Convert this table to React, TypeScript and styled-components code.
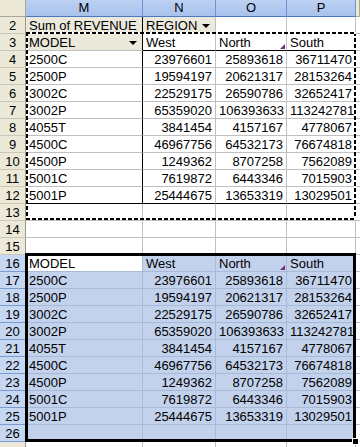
import React from "react";
import styled, { createGlobalStyle } from "styled-components";

const GlobalStyle = createGlobalStyle`
  html, body { margin: 0; padding: 0; background: #fff; }
  body { font-family: "Liberation Sans", Arial, sans-serif; overflow: hidden; }
`;

const Sheet = styled.div`
  position: relative;
  width: 360px;
  height: 447px;
  overflow: hidden;
  display: grid;
  grid-template-columns: 26px 117px 73px 71px 69px 4px;
  grid-template-rows: 17px;
  grid-auto-rows: 17px;
  font-size: 13px;
  color: #000;
`;

const Corner = styled.div`
  box-sizing: border-box;
  background: #ece9d8;
  border-right: 1px solid #aca899;
  border-bottom: 1px solid #aca899;
`;

const ColHead = styled.div<{ $sel?: boolean }>`
  box-sizing: border-box;
  background: ${(p) => (p.$sel ? "linear-gradient(#bcd1f3, #a9c2ec)" : "#ece9d8")};
  border-right: 1px solid ${(p) => (p.$sel ? "#6f94d3" : "#aca899")};
  border-bottom: 1px solid ${(p) => (p.$sel ? "#4f78c2" : "#aca899")};
  text-align: center;
  line-height: 16px;
  overflow: hidden;
`;

const RowHead = styled.div<{ $sel?: boolean }>`
  box-sizing: border-box;
  background: ${(p) => (p.$sel ? "#c6d7f2" : "#ece9d8")};
  border-right: 1px solid ${(p) => (p.$sel ? "#4a73bf" : "#9c9886")};
  border-bottom: 1px solid ${(p) => (p.$sel ? "#7a9bd3" : "#cbc7b6")};
  text-align: center;
  padding-top: 2px;
  line-height: 14px;
  overflow: hidden;
`;

type CellProps = {
  $right?: boolean;
  $bg?: string;
  $grid?: string;
  $darkRight?: boolean;
  $darkBottom?: boolean;
};

const Cell = styled.div<CellProps>`
  position: relative;
  box-sizing: border-box;
  background: ${(p) => p.$bg || "#fff"};
  border-right: 1px solid ${(p) => (p.$darkRight ? "#000" : p.$grid || "#c0c0c0")};
  border-bottom: 1px solid ${(p) => (p.$darkBottom ? "#000" : p.$grid || "#c0c0c0")};
  padding: 2px 3px 0 3px;
  line-height: 14px;
  text-align: ${(p) => (p.$right ? "right" : "left")};
  white-space: nowrap;
  overflow: hidden;
`;

const FieldButton = styled(Cell)`
  display: flex;
  align-items: center;
  justify-content: space-between;
  padding-top: 1px;
  background: #ebe8dc;
`;

const DropArrow = styled.span`
  width: 0;
  height: 0;
  margin-right: 2px;
  border-left: 4px solid transparent;
  border-right: 4px solid transparent;
  border-top: 4px solid #000;
`;

const CommentMark = styled.span`
  position: absolute;
  right: 1px;
  bottom: 1px;
  width: 0;
  height: 0;
  border-left: 5px solid transparent;
  border-bottom: 5px solid #7d2a7d;
`;

const Marquee = styled.div`
  position: absolute;
  left: 26px;
  top: 32px;
  width: 330px;
  height: 188px;
  pointer-events: none;
  background:
    repeating-linear-gradient(90deg, #000 0 4px, #fff 4px 6px) left top / 100% 2px no-repeat,
    repeating-linear-gradient(90deg, #000 0 4px, #fff 4px 6px) left bottom / 100% 2px no-repeat,
    repeating-linear-gradient(180deg, #000 0 4px, #fff 4px 6px) left top / 2px 100% no-repeat,
    repeating-linear-gradient(180deg, #000 0 4px, #fff 4px 6px) right top / 2px 100% no-repeat;
`;

const Selection = styled.div`
  position: absolute;
  left: 25px;
  top: 253px;
  width: 331px;
  height: 189px;
  box-sizing: border-box;
  border: 3px solid #000;
  pointer-events: none;
`;

const FillHandle = styled.div`
  position: absolute;
  right: -6px;
  bottom: -6px;
  width: 5px;
  height: 5px;
  background: #000;
  border: 1px solid #fff;
`;

const data: [string, number, number, number][] = [
  ["2500C", 23976601, 25893618, 36711470],
  ["2500P", 19594197, 20621317, 28153264],
  ["3002C", 22529175, 26590786, 32652417],
  ["3002P", 65359020, 106393633, 113242781],
  ["4055T", 3841454, 4157167, 4778067],
  ["4500C", 46967756, 64532173, 76674818],
  ["4500P", 1249362, 8707258, 7562089],
  ["5001C", 7619872, 6443346, 7015903],
  ["5001P", 25444675, 13653319, 13029501],
];

const SEL_BG = "#c3d2ec";
const SEL_GRID = "#a9b9d6";

export default function App() {
  return (
    <>
      <GlobalStyle />
      <Sheet>
        <Corner />
        <ColHead $sel>M</ColHead>
        <ColHead $sel>N</ColHead>
        <ColHead $sel>O</ColHead>
        <ColHead $sel>P</ColHead>
        <ColHead />

        <RowHead>2</RowHead>
        <FieldButton $darkRight>Sum of REVENUE</FieldButton>
        <FieldButton>
          REGION <DropArrow />
        </FieldButton>
        <Cell />
        <Cell />
        <Cell />

        <RowHead>3</RowHead>
        <FieldButton $darkRight>
          MODEL <DropArrow />
        </FieldButton>
        <Cell $darkBottom>West</Cell>
        <Cell $darkBottom>
          North
          <CommentMark />
        </Cell>
        <Cell $darkBottom>South</Cell>
        <Cell />

        {data.map((r, i) => {
          const last = i === data.length - 1;
          return (
            <React.Fragment key={"p" + r[0]}>
              <RowHead>{4 + i}</RowHead>
              <Cell $darkRight $darkBottom={last}>{r[0]}</Cell>
              <Cell $right $darkBottom={last}>{r[1]}</Cell>
              <Cell $right $darkBottom={last}>{r[2]}</Cell>
              <Cell $right $darkBottom={last}>{r[3]}</Cell>
              <Cell />
            </React.Fragment>
          );
        })}

        {[13, 14, 15].map((n) => (
          <React.Fragment key={"e" + n}>
            <RowHead>{n}</RowHead>
            <Cell />
            <Cell />
            <Cell />
            <Cell />
            <Cell />
          </React.Fragment>
        ))}

        <RowHead $sel>16</RowHead>
        <Cell $grid={SEL_GRID}>MODEL</Cell>
        <Cell $bg={SEL_BG} $grid={SEL_GRID}>West</Cell>
        <Cell $bg={SEL_BG} $grid={SEL_GRID}>
          North
          <CommentMark />
        </Cell>
        <Cell $bg={SEL_BG} $grid={SEL_GRID}>South</Cell>
        <Cell />

        {data.map((r, i) => (
          <React.Fragment key={"c" + r[0]}>
            <RowHead $sel>{17 + i}</RowHead>
            <Cell $bg={SEL_BG} $grid={SEL_GRID}>{r[0]}</Cell>
            <Cell $bg={SEL_BG} $grid={SEL_GRID} $right>{r[1]}</Cell>
            <Cell $bg={SEL_BG} $grid={SEL_GRID} $right>{r[2]}</Cell>
            <Cell $bg={SEL_BG} $grid={SEL_GRID} $right>{r[3]}</Cell>
            <Cell />
          </React.Fragment>
        ))}

        <RowHead $sel>26</RowHead>
        <Cell $bg={SEL_BG} $grid={SEL_GRID} />
        <Cell $bg={SEL_BG} $grid={SEL_GRID} />
        <Cell $bg={SEL_BG} $grid={SEL_GRID} />
        <Cell $bg={SEL_BG} $grid={SEL_GRID} />
        <Cell />

        <RowHead />
        <Cell />
        <Cell />
        <Cell />
        <Cell />
        <Cell />

        <Marquee />
        <Selection>
          <FillHandle />
        </Selection>
      </Sheet>
    </>
  );
}
